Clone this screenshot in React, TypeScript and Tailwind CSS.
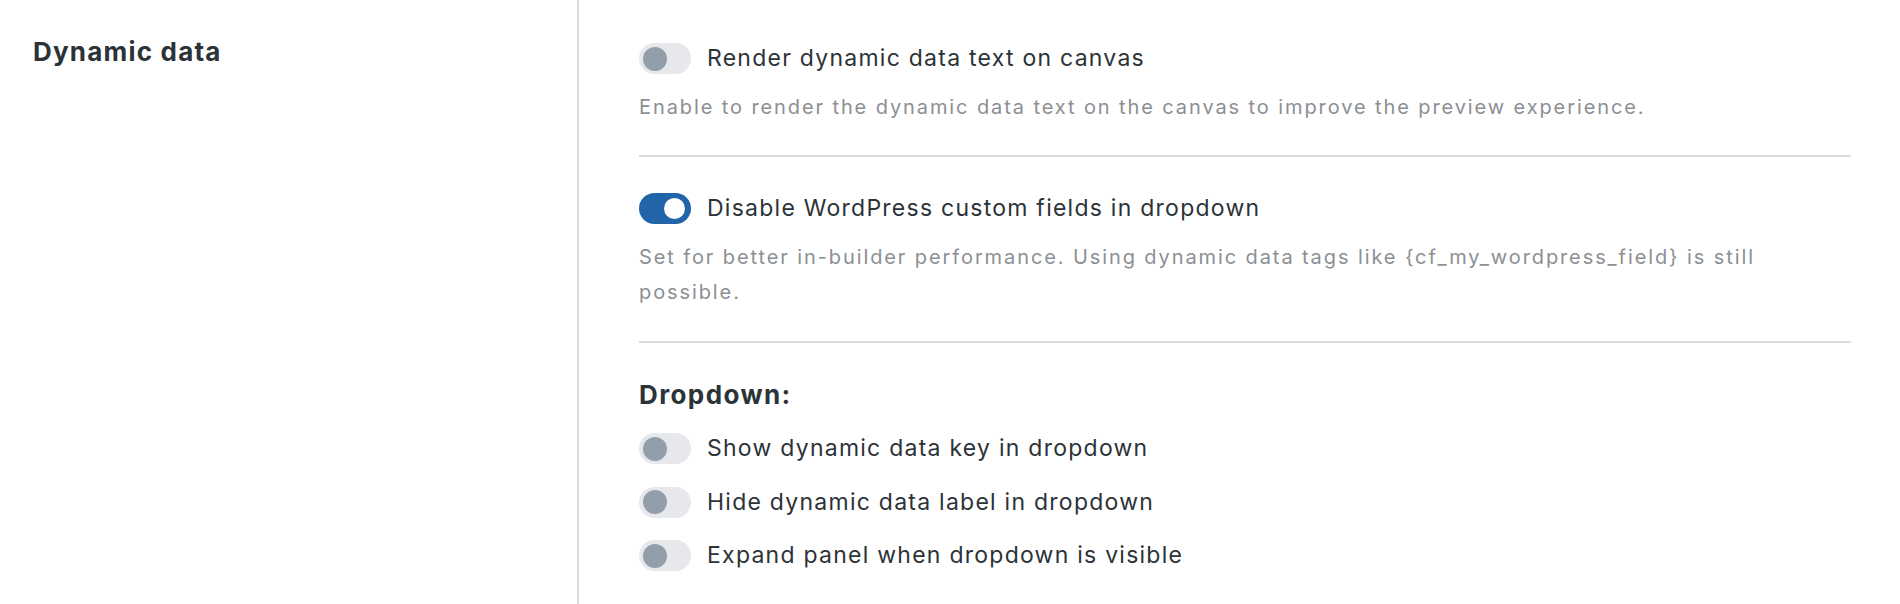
import React from "react";

function Toggle({ on }: { on?: boolean }) {
  if (on) {
    return (
      <div className="relative h-[31px] w-[52px] shrink-0 rounded-full bg-[#2164a8]">
        <div className="absolute right-[6px] top-[5px] h-[21px] w-[21px] rounded-full bg-white" />
      </div>
    );
  }
  return (
    <div className="relative h-[31px] w-[52px] shrink-0 rounded-full bg-[#e6e8ec]">
      <div className="absolute left-[3.5px] top-[3.5px] h-[24px] w-[24px] rounded-full bg-[#939eab]" />
    </div>
  );
}

function Row({ on, label }: { on?: boolean; label: string }) {
  return (
    <div className="flex h-[31px] items-center gap-[16px]">
      <Toggle on={on} />
      <span className="text-[23px] leading-[31px] tracking-[1.25px] text-[#2c3338]">{label}</span>
    </div>
  );
}

export default function App() {
  return (
    <div className="flex h-[604px] w-[1900px] bg-white font-['Inter',sans-serif]">
      <div className="w-[579px] shrink-0 border-r-2 border-[#dcdcde] pl-[33px] pt-[34px]">
        <h2 className="text-[26px] font-bold leading-[36px] tracking-[1.2px] text-[#2c3338]">Dynamic data</h2>
      </div>
      <div className="flex-1 pl-[60px] pr-[49px] pt-[43px]">
        <Row label="Render dynamic data text on canvas" />
        <p className="mt-[16px] text-[20px] leading-[35px] tracking-[1.9px] text-[#8c8f94]">
          Enable to render the dynamic data text on the canvas to improve the preview experience.
        </p>
        <div className="mt-[30px] h-[2px] bg-[#dcdcde]" />
        <div className="mt-[36px]">
          <Row on label="Disable WordPress custom fields in dropdown" />
        </div>
        <p className="mt-[16px] text-[20px] leading-[35px] tracking-[1.9px] text-[#8c8f94]">
          Set for better in-builder performance. Using dynamic data tags like {"{cf_my_wordpress_field}"} is still
          <br />
          possible.
        </p>
        <div className="mt-[31px] h-[2px] bg-[#dcdcde]" />
        <h3 className="mt-[34px] text-[26px] font-bold leading-[36px] tracking-[1.4px] text-[#2c3338]">Dropdown:</h3>
        <div className="mt-[20px] flex flex-col gap-[22.5px]">
          <Row label="Show dynamic data key in dropdown" />
          <Row label="Hide dynamic data label in dropdown" />
          <Row label="Expand panel when dropdown is visible" />
        </div>
      </div>
    </div>
  );
}
